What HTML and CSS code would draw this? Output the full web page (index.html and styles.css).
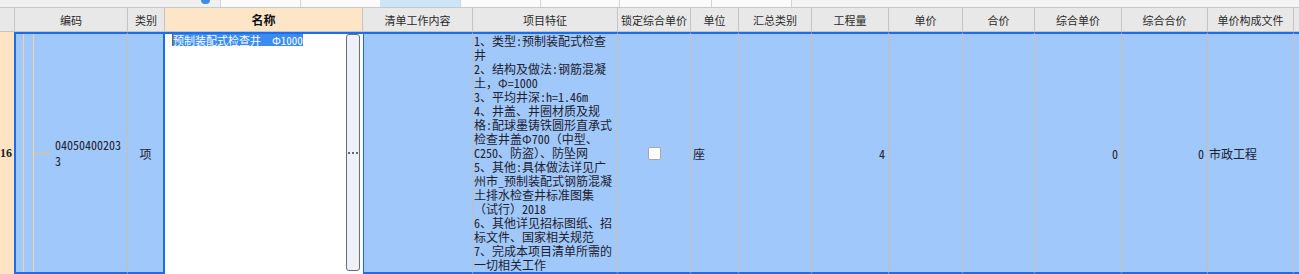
FILE: index.html
```html
<!DOCTYPE html>
<html lang="zh-CN">
<head>
<meta charset="utf-8">
<title>清单</title>
<link rel="stylesheet" href="styles.css">
</head>
<body>
<div class="sheet">
  <div class="strip">
    <div class="seg seg-a"><span class="dot"></span></div>
    <div class="seg seg-w80"></div>
    <div class="seg seg-plain seg-w80b"></div>
    <div class="seg seg-sel"></div>
    <div class="seg seg-w80"></div>
    <div class="seg seg-w79"></div>
    <div class="seg seg-w92"></div>
    <div class="seg seg-w80"></div>
    <div class="seg seg-rest"></div>
  </div>

  <div class="grid head">
    <div class="h"></div>
    <div class="h">编码</div>
    <div class="h">类别</div>
    <div class="h h-name">名称</div>
    <div class="h">清单工作内容</div>
    <div class="h">项目特征</div>
    <div class="h">锁定综合单价</div>
    <div class="h">单位</div>
    <div class="h">汇总类别</div>
    <div class="h">工程量</div>
    <div class="h">单价</div>
    <div class="h">合价</div>
    <div class="h">综合单价</div>
    <div class="h">综合合价</div>
    <div class="h">单价构成文件</div>
    <div class="h h-end"></div>
  </div>

  <div class="grid body">
    <div class="rn">16</div>
    <div class="c code"><span class="branch"></span><span class="code-text">040504002033</span></div>
    <div class="c kind">项</div>
    <div class="name">
      <div class="name-text"><span class="caret"></span><span class="sel">预制装配式检查井&nbsp;&nbsp;Φ1000</span></div>
      <div class="more"><span></span><span></span><span></span></div>
    </div>
    <div class="c first-right"></div>
    <div class="c feat">
      <div class="feat-text">1、类型:预制装配式检查<br>井<br>2、结构及做法:钢筋混凝<br>土，Φ=1000<br>3、平均井深:h=1.46m<br>4、井盖、井圈材质及规<br>格:配球墨铸铁圆形直承式<br>检查井盖Φ700（中型、<br>C250、防盗）、防坠网<br>5、其他:具体做法详见广<br>州市_预制装配式钢筋混凝<br>土排水检查井标准图集<br>（试行）2018<br>6、其他详见招标图纸、招<br>标文件、国家相关规范<br>7、完成本项目清单所需的<br>一切相关工作</div>
    </div>
    <div class="c center"><span class="check"></span></div>
    <div class="c left">座</div>
    <div class="c"></div>
    <div class="c num">4</div>
    <div class="c"></div>
    <div class="c"></div>
    <div class="c num">0</div>
    <div class="c num">0</div>
    <div class="c left1">市政工程</div>
    <div class="c c-end"></div>
  </div>
</div>
</body>
</html>
```

FILE: styles.css
```css
* { box-sizing: border-box; }
html, body { margin: 0; padding: 0; background: #ffffff; }
body {
  width: 1299px;
  height: 274px;
  overflow: hidden;
  font-family: "Noto Sans Mono CJK SC", "Noto Sans CJK SC", monospace;
  color: #1e2030;
}
.sheet { width: 1299px; }

/* top strip */
.strip {
  display: flex;
  height: 8px;
  border-bottom: 1px solid #c8c8c8;
  background: #f2f2f2;
}
.seg { height: 7px; border-right: 1px solid #d4d4d4; background: #fbfbfb; }
.seg-a { width: 221px; background: #f0f0f0; display: flex; justify-content: flex-end; padding-right: 10px; }
.dot { width: 9px; height: 4px; background: #3a8de8; border-radius: 0 0 5px 5px; }
.seg-w80 { width: 80px; }
.seg-plain { border-right: none; }
.seg-w80b { width: 79px; }
.seg-sel { width: 81px; background: #cce5f8; }
.seg-w79 { width: 79px; }
.seg-w92 { width: 92px; }
.seg-rest { flex: 1; background: #f4f4f4; border-right: none; }

/* grid */
.grid {
  display: grid;
  grid-template-columns: 15px 113px 37px 198px 110px 145px 73px 48px 73px 77px 74px 72px 87px 86px 86px 1fr;
}
.head { height: 24px; border-bottom: 1px solid #c4c4c4; background: #e8e8e8; }
.h {
  border-right: 1px solid #c4c4c4;
  display: flex;
  align-items: center;
  justify-content: center;
  font-family: "Noto Sans CJK SC", sans-serif;
  font-size: 11px;
  color: #2a2a2a;
  white-space: nowrap;
  overflow: hidden;
}
.h-name { background: #fde6c8; font-weight: bold; color: #111111; font-size: 12px; }
.h-end { border-right: none; }

.body { height: 242px; }
.rn {
  background: #ffe4c4;
  border-right: 1px solid #1a6cf0;
  display: flex;
  align-items: center;
  justify-content: flex-end;
  padding-right: 2px;
  font-family: "Liberation Serif", serif;
  font-weight: bold;
  font-size: 12px;
  color: #222;
  overflow: hidden;
}
.c {
  background: #a0c8fa;
  border-top: 2px solid #1a6cf0;
  border-bottom: 2px solid #1a6cf0;
  border-right: 1px solid #c6bfb6;
  display: flex;
  align-items: center;
  font-size: 12px;
  overflow: hidden;
  white-space: nowrap;
}
.code {
  border-left: 1px solid #1a6cf0;
  padding-left: 18px;
  background:
    linear-gradient(#f1d2a8, #f1d2a8) 7px 0 / 1px 100% no-repeat,
    linear-gradient(#f1d2a8, #f1d2a8) 17px 0 / 1px 100% no-repeat,
    #a0c8fa;
}
.branch { width: 16px; height: 1px; background: #f3bf6c; margin-right: 5px; flex: none; }
.code-text {
  flex: none;
  width: 68px;
  white-space: normal;
  word-break: break-all;
  line-height: 16px;
}
.kind { justify-content: center; border-right: 2px solid #1a6cf0; }

.name {
  background: #ffffff;
  border-top: 2px solid #1a6cf0;
  display: flex;
  align-items: flex-start;
}
.name-text {
  flex: 1;
  padding-left: 7px;
  font-size: 11px;
  line-height: 12px;
  white-space: nowrap;
  display: flex;
  align-items: stretch;
}
.caret { width: 1px; background: #8a5a20; }
.sel { background: #3c8cf0; color: #ffffff; }
.more {
  align-self: stretch;
  width: 14px;
  margin: 0 3px 3px 0;
  border: 1px solid #6e6e6e;
  border-radius: 3px;
  background: #eef1f8;
  display: flex;
  align-items: center;
  justify-content: center;
  gap: 2px;
}
.more span { width: 2px; height: 2px; background: #666666; }
.first-right { border-left: 1px solid #1a6cf0; }
.feat { padding-left: 1px; }
.feat-text { line-height: 14px; white-space: nowrap; }
.center { justify-content: center; }
.check {
  width: 13px;
  height: 13px;
  background: #ffffff;
  border: 1px solid #a8a8a8;
  border-radius: 2px;
}
.left { padding-left: 2px; }
.left1 { padding-left: 1px; }
.num { justify-content: flex-end; padding-right: 3px; }
.c-end { border-right: none; }
```
